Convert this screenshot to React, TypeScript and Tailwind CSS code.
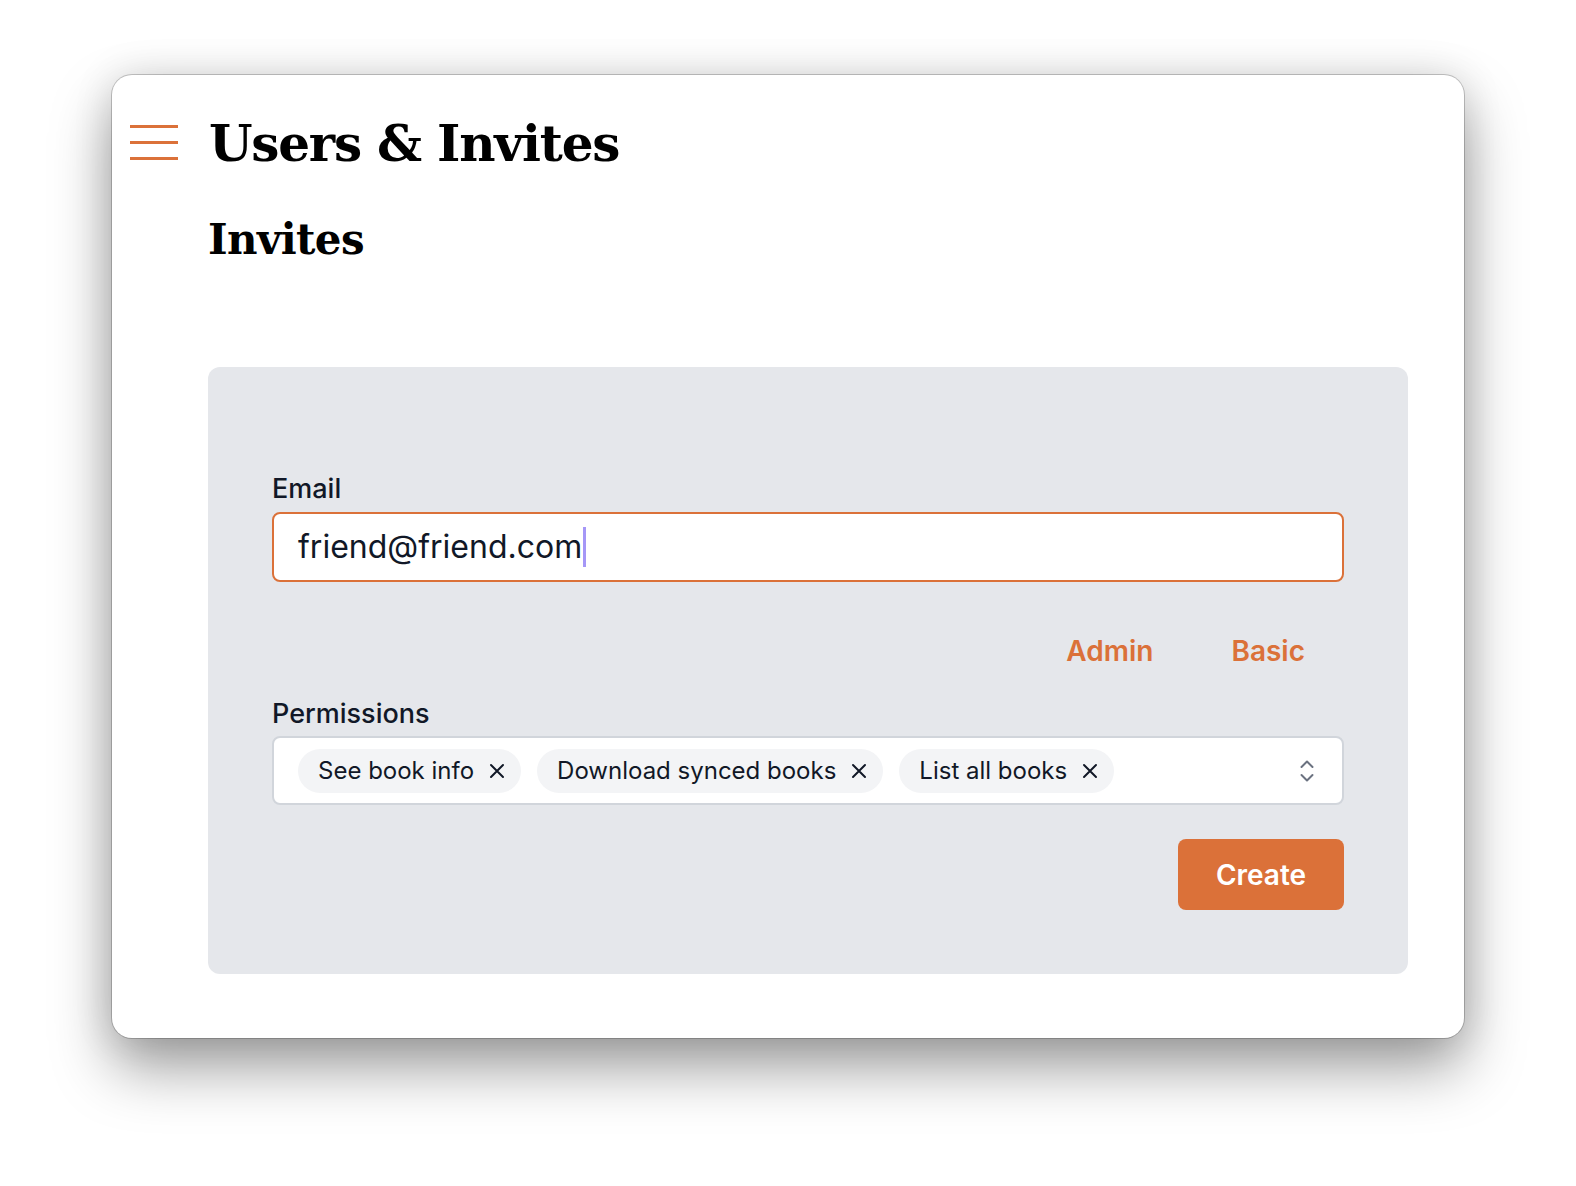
const orange = "bg-[#db7139]";

function Chip({ label }: { label: string }) {
  return (
    <span className="flex h-[44px] items-center gap-[15px] rounded-full bg-[#f3f4f6] pl-[20px] pr-[16px] text-[24px] text-[#111827]">
      {label}
      <svg width="16" height="16" viewBox="0 0 16 16" fill="none" stroke="#111827" strokeWidth="2" strokeLinecap="round">
        <path d="M2 2 L14 14 M14 2 L2 14" />
      </svg>
    </span>
  );
}

export default function App() {
  return (
    <div className="min-h-screen w-full bg-white pb-[148px] pl-[112px] pt-[75px] font-['Inter',sans-serif]">
      <div className="flex h-[963px] w-[1352px] flex-col rounded-[20px] bg-white shadow-[0_30px_60px_rgba(0,0,0,0.38),0_0_40px_rgba(0,0,0,0.12)] ring-1 ring-black/20">
        <header className="flex items-center pl-[18px] pt-[44px]">
          <button className="mb-[4px] flex h-[35px] w-[48px] flex-col justify-between">
            <span className={`h-[3px] w-full ${orange}`} />
            <span className={`h-[3px] w-full ${orange}`} />
            <span className={`h-[3px] w-full ${orange}`} />
          </button>
          <h1 className="ml-[31px] font-['DejaVu_Serif',serif] text-[50px] font-bold leading-none tracking-[-0.025em] text-black">
            Users &amp; Invites
          </h1>
        </header>

        <h2 className="ml-[96px] mt-[50px] font-['DejaVu_Serif',serif] text-[42px] font-bold leading-none tracking-[-0.015em] text-black">
          Invites
        </h2>

        <section className="ml-[96px] mt-[106px] flex w-[1200px] flex-col rounded-[12px] bg-[#e5e7eb] px-[64px] pb-[64px] pt-[106px]">
          <label className="mb-[7px] text-[27px] font-medium leading-[32px] text-[#111827]">Email</label>
          <div className="flex h-[70px] items-center rounded-[8px] border-2 border-[#db7139] bg-white pl-[24px] text-[32px] text-[#111827]">
            friend@friend.com
            <span className="ml-[1px] h-[40px] w-[3px] bg-[#a597f7]" />
          </div>

          <div className="mt-[51px] flex justify-end">
            <button className="px-[39px] text-[28px] font-semibold leading-[36px] text-[#db7139]">Admin</button>
            <button className="px-[39px] text-[28px] font-semibold leading-[36px] text-[#db7139]">Basic</button>
          </div>

          <label className="mb-[6px] mt-[29px] text-[27px] font-medium leading-[32px] text-[#111827]">
            Permissions
          </label>
          <div className="flex h-[69px] items-center rounded-[8px] border-2 border-[#d1d5db] bg-white pl-[24px] pr-[28px]">
            <div className="flex flex-1 items-center gap-[16px]">
              <Chip label="See book info" />
              <Chip label="Download synced books" />
              <Chip label="List all books" />
            </div>
            <svg width="14" height="22" viewBox="0 0 14 22" fill="none" stroke="#6b7280" strokeWidth="2" strokeLinecap="round" strokeLinejoin="round">
              <path d="M1.5 7 L7 1.5 L12.5 7" />
              <path d="M1.5 15 L7 20.5 L12.5 15" />
            </svg>
          </div>

          <button className={`ml-auto mt-[34px] h-[71px] w-[166px] rounded-[8px] ${orange} text-[28px] font-semibold text-white`}>
            Create
          </button>
        </section>
      </div>
    </div>
  );
}
